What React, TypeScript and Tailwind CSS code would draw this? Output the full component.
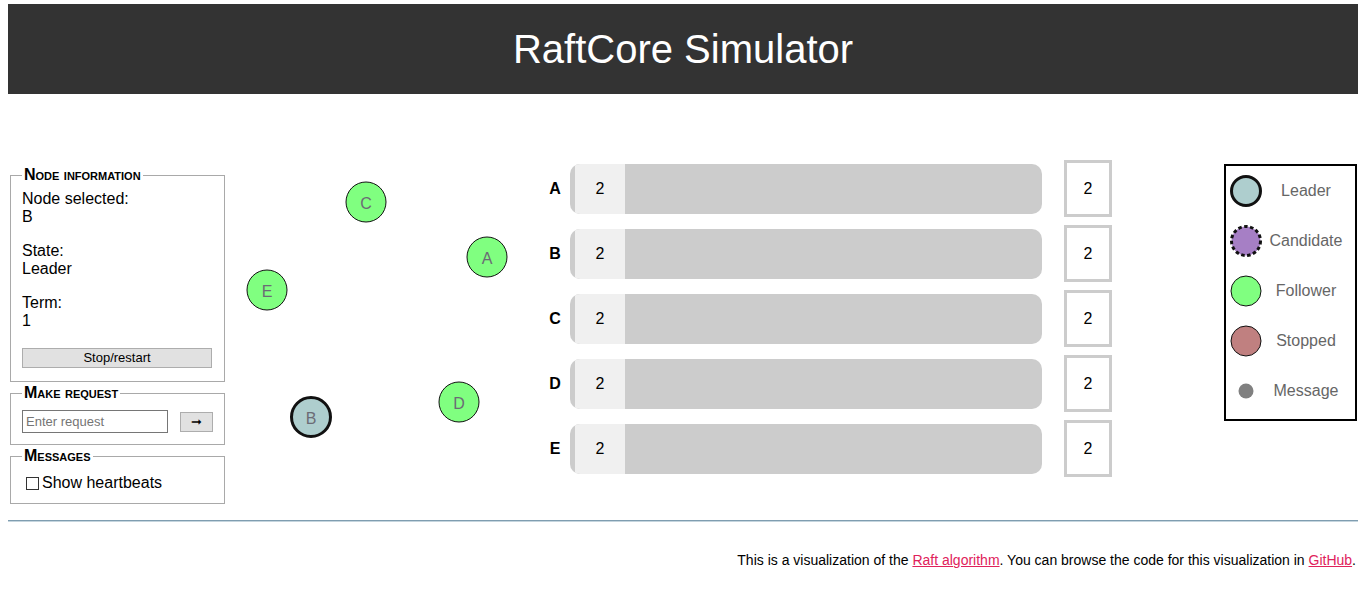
import { useState } from 'react';

type NodeId = 'A' | 'B' | 'C' | 'D' | 'E';

interface SimNode {
  id: NodeId;
  x: number;
  y: number;
  leader?: boolean;
}

const nodes: SimNode[] = [
  { id: 'C', x: 141, y: 42 },
  { id: 'A', x: 262, y: 97 },
  { id: 'E', x: 42, y: 130 },
  { id: 'B', x: 86, y: 257, leader: true },
  { id: 'D', x: 234, y: 242 },
];

const logs: { id: NodeId; entry: number; commit: number }[] = [
  { id: 'A', entry: 2, commit: 2 },
  { id: 'B', entry: 2, commit: 2 },
  { id: 'C', entry: 2, commit: 2 },
  { id: 'D', entry: 2, commit: 2 },
  { id: 'E', entry: 2, commit: 2 },
];

const legendItems = [
  { label: 'Leader', fill: '#aecece', stroke: 3, r: 14.5, dash: '' },
  { label: 'Candidate', fill: '#a67fc5', stroke: 3, r: 14.5, dash: '3.5 2.5' },
  { label: 'Follower', fill: '#80ff80', stroke: 1, r: 15, dash: '' },
  { label: 'Stopped', fill: '#c08080', stroke: 1, r: 15, dash: '' },
  { label: 'Message', fill: '#808080', stroke: 0, r: 7.5, dash: '' },
];

function Fieldset({ title, className, children }: { title: string; className?: string; children: React.ReactNode }) {
  return (
    <fieldset className={`border border-[#a9a9a9] px-[11px] ${className ?? ''}`}>
      <legend className="px-[2px] text-[16px] leading-[18px] font-bold [font-variant:small-caps] text-black">
        {title}
      </legend>
      {children}
    </fieldset>
  );
}

export default function App() {
  const [request, setRequest] = useState('');
  const [heartbeats, setHeartbeats] = useState(false);

  return (
    <div className="min-h-[593px] bg-white font-['Liberation_Sans',Arial,sans-serif] text-black">
      <header className="mx-2 mt-1 h-[90px] bg-[#333333] flex items-center justify-center">
        <h1 className="text-[40px] leading-none text-white">RaftCore Simulator</h1>
      </header>

      <div className="flex items-start mt-[66px]">
        {/* left controls */}
        <div className="ml-[10px] w-[215px] mt-[6px] flex flex-col gap-[2px]">
          <Fieldset title="Node information" className="pb-[12px]">
            <div className="pt-[6px] text-[16px] leading-[18px]">
              <p className="mb-4">Node selected:<br />B</p>
              <p className="mb-4">State:<br />Leader</p>
              <p className="mb-[15px]">Term:<br />1</p>
            </div>
            <button className="w-[190px] h-[20px] bg-[#e1e1e1] border border-[#adadad] text-[13px] leading-none">
              Stop/restart
            </button>
          </Fieldset>

          <Fieldset title="Make request" className="pb-[11px]">
            <div className="flex items-center pt-[8px]">
              <input
                value={request}
                onChange={(e) => setRequest(e.target.value)}
                placeholder="Enter request"
                className="w-[146px] h-[23px] border border-[#767676] px-[3px] text-[13px] placeholder:text-[#757575] outline-none"
              />
              <button className="ml-[12px] w-[33px] h-[20px] bg-[#e1e1e1] border border-[#adadad] text-[13px] leading-none flex items-center justify-center">
                ➞
              </button>
            </div>
          </Fieldset>

          <Fieldset title="Messages" className="pb-[11px]">
            <label className="flex items-center pt-[9px] pl-[4px] text-[16px] leading-[18px]">
              <input
                type="checkbox"
                checked={heartbeats}
                onChange={(e) => setHeartbeats(e.target.checked)}
                className="w-[13px] h-[13px] mr-[3px] appearance-none border border-[#333] bg-white"
              />
              Show heartbeats
            </label>
          </Fieldset>
        </div>

        {/* cluster canvas */}
        <svg width="315" height="320" className="shrink-0">
          {nodes.map((n) => (
            <g key={n.id}>
              <circle
                cx={n.x}
                cy={n.y}
                r={n.leader ? 19.5 : 20}
                fill={n.leader ? '#aecece' : '#80ff80'}
                stroke="#111"
                strokeWidth={n.leader ? 3 : 1}
              />
              <text
                x={n.x}
                y={n.y + 1}
                textAnchor="middle"
                dominantBaseline="central"
                fontSize="16"
                fill="#6b6b75"
                fontFamily="Liberation Sans, Arial, sans-serif"
              >
                {n.id}
              </text>
            </g>
          ))}
        </svg>

        {/* logs */}
        <div className="w-[572px] flex flex-col gap-[8px]">
          {logs.map((l) => (
            <div key={l.id} className="h-[57px] flex items-center">
              <div className="w-[30px] text-center font-bold text-[16px] pt-[1px]">{l.id}</div>
              <div className="w-[472px] h-[50px] rounded-[10px] bg-[#cccccc] pl-[5px] overflow-hidden">
                <div className="w-[50px] h-full bg-[#f0f0f0] flex items-center justify-center text-[16px]">
                  {l.entry}
                </div>
              </div>
              <div className="ml-[22px] w-[48px] h-[57px] border-[3px] border-[#cccccc] flex items-center justify-center text-[16px]">
                {l.commit}
              </div>
            </div>
          ))}
        </div>

        {/* legend */}
        <div className="ml-auto mr-[9px] mt-[4px] w-[133px] border-2 border-black flex flex-col pb-[3px]">
          {legendItems.map((it) => (
            <div key={it.label} className="h-[50px] flex items-center">
              <svg width="40" height="50" className="shrink-0">
                <circle
                  cx="20"
                  cy="25"
                  r={it.r}
                  fill={it.fill}
                  stroke={it.stroke ? '#111' : 'none'}
                  strokeWidth={it.stroke}
                  strokeDasharray={it.dash || undefined}
                />
              </svg>
              <div className="w-[80px] text-center text-[16px] text-[#666]">{it.label}</div>
            </div>
          ))}
        </div>
      </div>

      <div className="mx-2 mt-[16px] border-t border-[#7f9db0] border-b border-b-[#c5d5de]" />

      <footer className="px-[10px] mt-[30px] text-right text-[14px] leading-[16px]">
        This is a visualization of the{' '}
        <a href="#" className="text-[#e0225b] underline">Raft algorithm</a>. You can browse the code for this
        visualization in{' '}
        <a href="#" className="text-[#e0225b] underline">GitHub</a>.
      </footer>
    </div>
  );
}
